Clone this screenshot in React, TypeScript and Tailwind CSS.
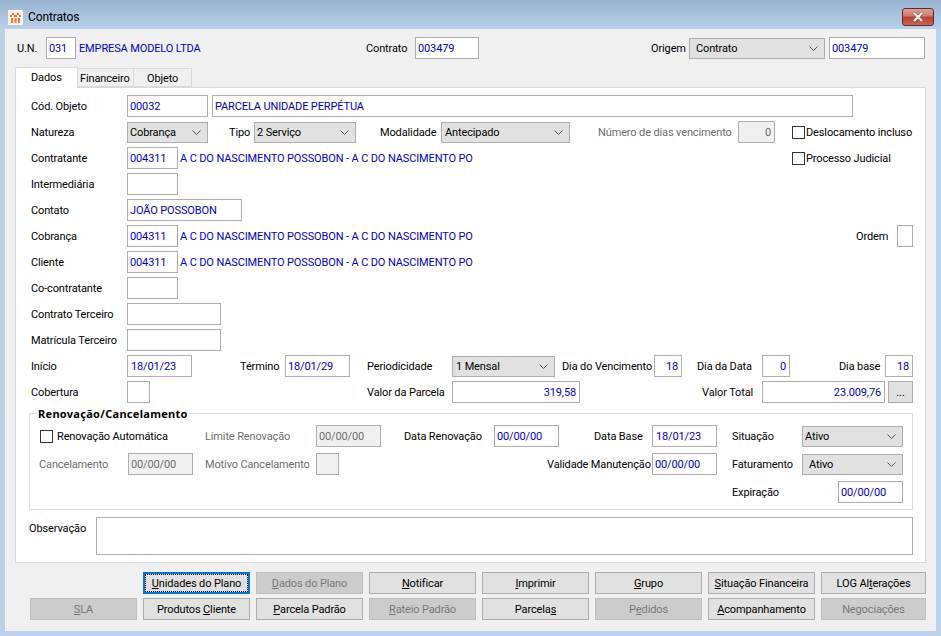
import React from "react";

const Label = ({ children, className = "", off }: any) => (
  <div className={`shrink-0 whitespace-nowrap ${off ? "text-[#6d6d6d]" : "text-black"} ${className}`}>{children}</div>
);

const Input = ({ value = "", className = "", right, off }: any) => (
  <div
    className={`h-[22px] shrink-0 border border-[#adadad] flex items-center pl-[2px] pr-[3px] pt-[1px] text-[#0000c8] whitespace-nowrap overflow-hidden ${
      right ? "justify-end" : ""
    } ${off ? "bg-[#f0f0f0] text-[#6d6d6d]" : "bg-white"} ${className}`}
  >
    {value}
  </div>
);

const Select = ({ value, className = "" }: any) => (
  <div
    className={`h-[21px] shrink-0 border border-[#adadad] bg-[#e1e1e1] flex items-center justify-between pl-[2px] pr-[6px] text-black ${className}`}
  >
    <span>{value}</span>
    <svg width="9" height="5" viewBox="0 0 9 5" fill="none">
      <path d="M0.5 0.5 L4.5 4.5 L8.5 0.5" stroke="#555" />
    </svg>
  </div>
);

const Check = ({ label, className = "" }: any) => (
  <div className={`flex items-center shrink-0 ${className}`}>
    <div className="w-[13px] h-[13px] border border-[#333] bg-white" />
    <span className="ml-[1px]">{label}</span>
  </div>
);

const Row = ({ children, className = "" }: any) => (
  <div className={`flex items-center h-[22px] ${className}`}>{children}</div>
);

const Linked = ({ code = "004311", text = "A C DO NASCIMENTO POSSOBON - A C DO NASCIMENTO PO" }: any) => (
  <>
    <Input value={code} className="w-[51px]" />
    <div className="ml-[2px] text-[#0000c8] whitespace-nowrap">{text}</div>
  </>
);

const Btn = ({ pre = "", u, post = "", off, focus, className = "" }: any) => (
  <div
    className={`h-[22px] shrink-0 flex items-center justify-center whitespace-pre ${
      focus
        ? "border-2 border-[#0078d7] bg-[#e1e1e1] outline-1 outline-dotted outline-black -outline-offset-3"
        : off
        ? "border border-[#bfbfbf] bg-[#cccccc] text-[#787878]"
        : "border border-[#adadad] bg-[#e1e1e1] text-black"
    } ${className}`}
  >
    {pre}
    <span className="underline">{u}</span>
    {post}
  </div>
);

export default function App() {
  return (
    <div className="w-[941px] h-[636px] overflow-hidden flex flex-col bg-[#b9d1ea] text-[11px] leading-[13px] tracking-[-0.13px] font-['Roboto','Liberation_Sans',sans-serif]">
      {/* title bar */}
      <div className="h-[29px] shrink-0 flex items-center pt-[5px] pl-[8px] pr-[7px] bg-gradient-to-b from-[#99b4d1] to-[#b9d1ea]">
        <div className="w-[15px] h-[15px] bg-[#fdf3ec] flex items-center justify-center">
          <svg width="11" height="11" viewBox="0 0 11 11" fill="#f4732a">
            <path d="M0 3h2v2H0zM2 1h2v2H2zM4 3h3v2H4zM7 1h2v2H7zM9 3h2v2H9zM1 6h2v5H1zM4.5 6h2v5h-2zM8 6h2v5H8z" />
          </svg>
        </div>
        <div className="ml-[5px] text-[12px] text-black">Contratos</div>
        <div className="ml-auto w-[32px] h-[18px] rounded-[3px] border border-[#5e2a2f] bg-[linear-gradient(#dba093_0%,#cf7a6c_45%,#b8402f_50%,#c9654f_100%)] flex items-center justify-center">
          <svg width="14" height="10" viewBox="0 0 14 10">
            <path d="M3 1 L11 9 M11 1 L3 9" stroke="#4a3a3a" strokeWidth="3.6" opacity="0.55" />
            <path d="M3 1 L11 9 M11 1 L3 9" stroke="#f4f4f4" strokeWidth="2.4" />
          </svg>
        </div>
      </div>

      {/* window body */}
      <div className="mx-[5px] h-[602px] bg-[#f0f0f0] flex flex-col">
        {/* header */}
        <Row className="mt-[8px] pl-[12px]">
          <Label className="w-[29px]">U.N.</Label>
          <Input value="031" className="w-[30px]" />
          <div className="ml-[3px] w-[287px] text-[#0000c8] whitespace-nowrap">EMPRESA MODELO LTDA</div>
          <Label className="w-[49px]">Contrato</Label>
          <Input value="003479" className="w-[64px]" />
          <Label className="ml-[172px] w-[38px]">Origem</Label>
          <Select value="Contrato" className="w-[136px] pl-[6px]" />
          <Input value="003479" className="ml-[4px] w-[96px]" />
        </Row>

        {/* tabs */}
        <div className="mt-[8px] ml-[10px] flex items-end h-[20px]">
          <div className="relative z-10 w-[63px] h-[21px] -mb-[1px] bg-white border border-b-0 border-[#d9d9d9] pl-[15px] pt-[3px]">Dados</div>
          <div className="w-[56px] h-[19px] border border-l-0 border-[#d9d9d9] pl-[2px] pt-[3px]">Financeiro</div>
          <div className="w-[58px] h-[19px] border border-l-0 border-[#d9d9d9] pl-[13px] pt-[3px]">Objeto</div>
        </div>

        {/* panel */}
        <div className="ml-[10px] w-[911px] h-[476px] bg-white border border-[#d9d9d9] flex flex-col pt-[7px] pl-[15px]">
          <div className="flex flex-col gap-[4px]">
            <Row>
              <Label className="w-[96px]">Cód. Objeto</Label>
              <Input value="00032" className="w-[81px]" />
              <Input value="PARCELA UNIDADE PERPÉTUA" className="ml-[4px] w-[641px]" />
            </Row>
            <Row>
              <Label className="w-[96px]">Natureza</Label>
              <Select value="Cobrança" className="w-[81px]" />
              <Label className="ml-[21px] w-[25px]">Tipo</Label>
              <Select value="2 Serviço" className="w-[102px]" />
              <Label className="ml-[24px] w-[61px]">Modalidade</Label>
              <Select value="Antecipado" className="w-[129px] pl-[3px]" />
              <Label off className="ml-[28px] w-[140px]">Número de dias vencimento</Label>
              <Input value="0" right off className="w-[37px]" />
              <Check label="Deslocamento incluso" className="ml-[17px]" />
            </Row>
            <Row>
              <Label className="w-[96px]">Contratante</Label>
              <div className="w-[665px] flex items-center shrink-0">
                <Linked />
              </div>
              <Check label="Processo Judicial" />
            </Row>
            <Row>
              <Label className="w-[96px]">Intermediária</Label>
              <Input className="w-[51px]" />
            </Row>
            <Row>
              <Label className="w-[96px]">Contato</Label>
              <Input value="JOÃO POSSOBON" className="w-[115px]" />
            </Row>
            <Row>
              <Label className="w-[96px]">Cobrança</Label>
              <div className="w-[729px] flex items-center shrink-0">
                <Linked />
              </div>
              <Label className="w-[41px]">Ordem</Label>
              <Input className="w-[16px]" />
            </Row>
            <Row>
              <Label className="w-[96px]">Cliente</Label>
              <Linked />
            </Row>
            <Row>
              <Label className="w-[96px]">Co-contratante</Label>
              <Input className="w-[51px]" />
            </Row>
            <Row>
              <Label className="w-[96px]">Contrato Terceiro</Label>
              <Input className="w-[94px]" />
            </Row>
            <Row>
              <Label className="w-[96px]">Matrícula Terceiro</Label>
              <Input className="w-[94px]" />
            </Row>
            <Row>
              <Label className="w-[96px]">Início</Label>
              <Input value="18/01/23" className="w-[65px] pl-[3px]" />
              <Label className="ml-[48px] w-[45px]">Término</Label>
              <Input value="18/01/29" className="w-[65px]" />
              <Label className="ml-[17px] w-[85px]">Periodicidade</Label>
              <Select value="1  Mensal" className="w-[103px] pl-[3px]" />
              <Label className="ml-[7px] w-[92px]">Dia do Vencimento</Label>
              <Input value="18" right className="w-[28px]" />
              <Label className="ml-[15px] w-[65px]">Dia da Data</Label>
              <Input value="0" right className="w-[28px]" />
              <Label className="ml-[49px] w-[46px]">Dia base</Label>
              <Input value="18" right className="w-[28px]" />
            </Row>
            <Row>
              <Label className="w-[96px]">Cobertura</Label>
              <Input className="w-[23px]" />
              <Label className="ml-[217px] w-[85px]">Valor da Parcela</Label>
              <Input value="319,58" right className="w-[128px]" />
              <Label className="ml-[122px] w-[60px]">Valor Total</Label>
              <Input value="23.009,76" right className="w-[123px]" />
              <Btn pre="..." className="ml-[3px] w-[25px]" />
            </Row>
          </div>

          {/* group box */}
          <div className="mt-[10px] -ml-[2px] w-[884px] h-[97px] border border-[#dcdcdc] relative pt-[11px] pl-[9px] flex flex-col gap-[6px]">
            <div className="absolute -top-[7px] left-[7px] px-[1px] bg-white font-bold tracking-[0.3px] font-['Noto_Sans',sans-serif]">Renovação/Cancelamento</div>
            <Row>
              <Check label={<span className="ml-[3px]">Renovação Automática</span>} className="ml-[1px] w-[165px]" />
              <Label off className="w-[111px]">Limite Renovação</Label>
              <Input value="00/00/00" off className="w-[65px]" />
              <Label className="ml-[23px] w-[90px]">Data Renovação</Label>
              <Input value="00/00/00" className="w-[65px]" />
              <Label className="ml-[35px] w-[58px]">Data Base</Label>
              <Input value="18/01/23" className="w-[65px] pl-[3px]" />
              <Label className="ml-[15px] w-[70px]">Situação</Label>
              <Select value="Ativo" className="w-[101px]" />
            </Row>
            <Row>
              <Label off className="w-[89px]">Cancelamento</Label>
              <Input value="00/00/00" off className="w-[65px]" />
              <Label off className="ml-[12px] w-[111px]">Motivo Cancelamento</Label>
              <Input off className="w-[23px]" />
              <Label className="ml-[208px] w-[105px]">Validade Manutenção</Label>
              <Input value="00/00/00" className="w-[65px]" />
              <Label className="ml-[15px] w-[70px]">Faturamento</Label>
              <Select value="Ativo" className="w-[101px] pl-[6px]" />
            </Row>
            <Row>
              <Label className="ml-[693px] w-[106px]">Expiração</Label>
              <Input value="00/00/00" className="w-[65px]" />
            </Row>
          </div>

          {/* observacao */}
          <div className="mt-[7px] -ml-[2px] flex">
            <Label className="w-[67px] pt-[5px]">Observação</Label>
            <div className="w-[817px] h-[38px] border border-[#adadad] bg-white" />
          </div>
        </div>

        {/* buttons */}
        <div className="mt-[9px] pl-[25px] flex flex-col gap-[4px]">
          <div className="flex gap-[6px]">
            <div className="w-[107px] shrink-0" />
            <Btn u="U" post="nidades do Plano" focus className="w-[107px]" />
            <Btn u="D" post="ados do Plano" off className="w-[107px]" />
            <Btn u="N" post="otificar" className="w-[107px]" />
            <Btn u="I" post="mprimir" className="w-[107px]" />
            <Btn u="G" post="rupo" className="w-[107px]" />
            <Btn u="S" post="ituação Financeira" className="w-[107px]" />
            <Btn pre="LOG Al" u="t" post="erações" className="w-[105px]" />
          </div>
          <div className="flex gap-[6px]">
            <Btn u="S" post="LA" off className="w-[107px]" />
            <Btn pre="Produtos " u="C" post="liente" className="w-[107px]" />
            <Btn u="P" post="arcela Padrão" className="w-[107px]" />
            <Btn u="R" post="ateio Padrão" off className="w-[107px]" />
            <Btn pre="Parcela" u="s" className="w-[107px]" />
            <Btn pre="P" u="e" post="didos" off className="w-[107px]" />
            <Btn u="A" post="companhamento" className="w-[107px]" />
            <Btn pre="Negociações" off className="w-[105px]" />
          </div>
        </div>
      </div>
    </div>
  );
}
